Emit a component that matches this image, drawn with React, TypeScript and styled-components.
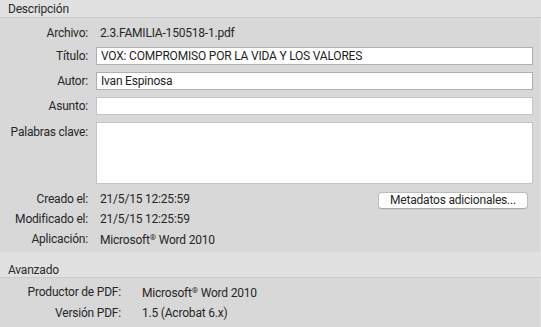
import React from "react";
import styled, { createGlobalStyle } from "styled-components";

const Global = createGlobalStyle`
  html, body { margin: 0; padding: 0; background: #d8d8d8; }
  body { font-family: Roboto, "Liberation Sans", Arial, sans-serif; font-size: 12px; letter-spacing: -0.2px; color: #262626; }
  * { box-sizing: border-box; }
`;

const Page = styled.div`
  width: 541px;
  height: 327px;
  overflow: hidden;
  display: flex;
  flex-direction: column;
  background: #e1e1e1;
`;

const Header = styled.div<{ $h: number; $pt: number }>`
  height: ${(p) => p.$h}px;
  padding: ${(p) => p.$pt}px 0 0 8px;
  line-height: 14px;
  background: #e1e1e1;
  border-bottom: 1px solid #cbcbcb;
  color: #2a2a2a;
  flex: none;
`;

const Body = styled.div<{ $pt: number; $pb: number }>`
  background: #d8d8d8;
  padding: ${(p) => p.$pt}px 0 ${(p) => p.$pb}px 0;
  margin-right: 1px;
  border-top-right-radius: 3px;
  display: flex;
  flex-direction: column;
  flex: none;
`;

const Row = styled.div<{ $h?: number; $mt?: number; $label: number; $gap: number; $top?: boolean }>`
  display: grid;
  grid-template-columns: ${(p) => p.$label}px 1fr;
  column-gap: ${(p) => p.$gap}px;
  align-items: ${(p) => (p.$top ? "start" : "center")};
  height: ${(p) => (p.$h ? `${p.$h}px` : "auto")};
  margin-top: ${(p) => p.$mt ?? 0}px;
  padding-right: 7px;
`;

const Label = styled.div<{ $top?: boolean }>`
  text-align: right;
  line-height: 18px;
  white-space: nowrap;
  margin-top: ${(p) => (p.$top ? 1 : 0)}px;
`;

const Value = styled.div<{ $pl: number }>`
  padding-left: ${(p) => p.$pl}px;
  line-height: 18px;
  white-space: nowrap;
  display: flex;
  align-items: center;
  justify-content: space-between;
`;

const Field = styled.div<{ $h: number; $soft?: boolean }>`
  height: ${(p) => p.$h}px;
  background: #ffffff;
  border: 1px solid ${(p) => (p.$soft ? "#c4c4c4" : "#aeaeae")};
  padding: 0 4px;
  line-height: ${(p) => p.$h - 2}px;
  color: #1e1e1e;
  white-space: nowrap;
  overflow: hidden;
`;

const Button = styled.button`
  width: 150px;
  height: 17px;
  margin-right: 5px;
  margin-top: 2px;
  background: #ffffff;
  border: 1px solid #bcbcbc;
  border-bottom-color: #a8a8a8;
  border-radius: 4px;
  box-shadow: 0 0.5px 0 rgba(0, 0, 0, 0.08);
  font: inherit;
  font-size: 12px;
  letter-spacing: -0.2px;
  color: #262626;
  padding: 0;
  line-height: 15px;
`;

const Sup = styled.span`
  font-size: 8px;
  vertical-align: 4px;
`;

const L1 = 88;
const G1 = 8;
const L2 = 121;
const G2 = 21;

export default function App() {
  return (
    <Page>
      <Global />
      <Header $h={18} $pt={2}>Descripción</Header>
      <Body $pt={6} $pb={3}>
        <Row $h={18} $label={L1} $gap={G1}>
          <Label>Archivo:</Label>
          <Value $pl={4}>2.3.FAMILIA-150518-1.pdf</Value>
        </Row>
        <Row $mt={5} $label={L1} $gap={G1}>
          <Label>Título:</Label>
          <Field $h={18}>VOX: COMPROMISO POR LA VIDA Y LOS VALORES</Field>
        </Row>
        <Row $mt={7} $label={L1} $gap={G1}>
          <Label>Autor:</Label>
          <Field $h={18}>Ivan Espinosa</Field>
        </Row>
        <Row $mt={7} $label={L1} $gap={G1}>
          <Label>Asunto:</Label>
          <Field $h={18} $soft />
        </Row>
        <Row $mt={7} $label={L1} $gap={G1} $top>
          <Label $top>Palabras clave:</Label>
          <Field $h={62} $soft />
        </Row>
        <Row $mt={5} $h={20} $label={L1} $gap={G1}>
          <Label>Creado el:</Label>
          <Value $pl={4}>
            <span>21/5/15 12:25:59</span>
            <Button type="button">Metadatos adicionales...</Button>
          </Value>
        </Row>
        <Row $h={20} $label={L1} $gap={G1}>
          <Label>Modificado el:</Label>
          <Value $pl={4}>21/5/15 12:25:59</Value>
        </Row>
        <Row $h={20} $label={L1} $gap={G1}>
          <Label>Aplicación:</Label>
          <Value $pl={4}>
            <span>
              Microsoft<Sup>®</Sup> Word 2010
            </span>
          </Value>
        </Row>
      </Body>
      <Header $h={26} $pt={11}>Avanzado</Header>
      <Body $pt={4} $pb={6}>
        <Row $h={20} $label={L2} $gap={G2}>
          <Label>Productor de PDF:</Label>
          <Value $pl={0}>
            <span>
              Microsoft<Sup>®</Sup> Word 2010
            </span>
          </Value>
        </Row>
        <Row $h={20} $mt={1} $label={L2} $gap={G2}>
          <Label>Versión PDF:</Label>
          <Value $pl={0}>1.5 (Acrobat 6.x)</Value>
        </Row>
      </Body>
    </Page>
  );
}
